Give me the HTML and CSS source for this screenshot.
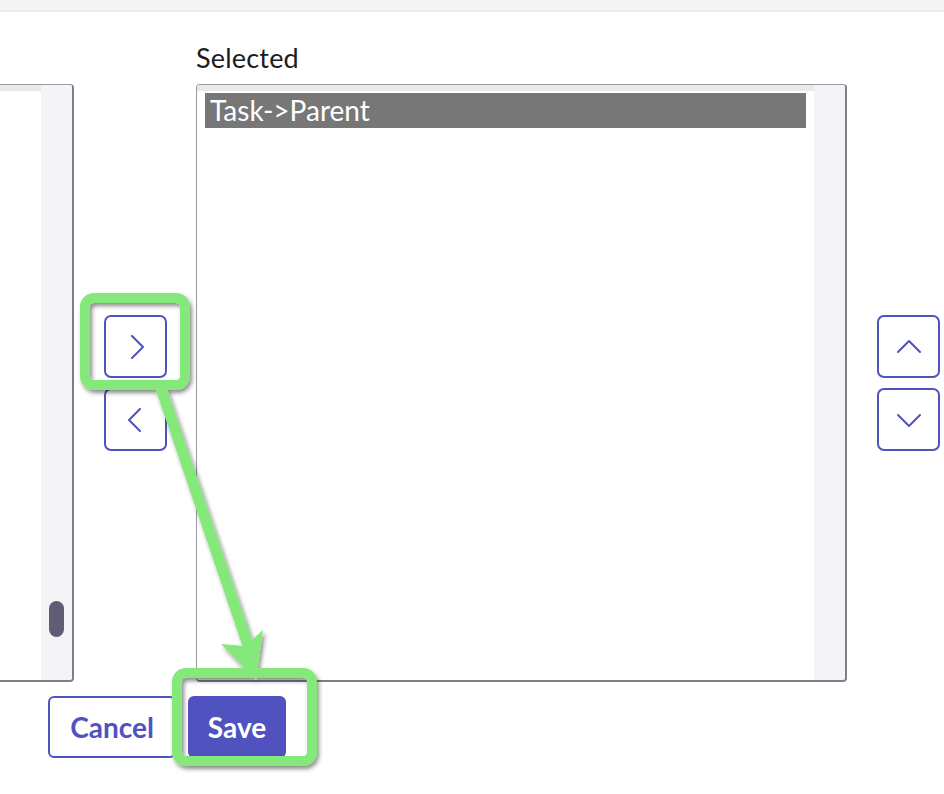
FILE: index.html
```html
<!DOCTYPE html>
<html lang="en">
<head>
<meta charset="utf-8">
<title>Columns</title>
<link rel="stylesheet" href="styles.css">
</head>
<body>
<div class="topbar"></div>
<div class="page">
  <div class="picker">
    <div class="label label-hidden">Available</div>
    <div class="label-gap"></div>
    <div class="label">Selected</div>
    <div class="label-gap"></div>

    <div class="listbox listbox-left">
      <div class="list-content">
        <div class="list-shade"></div>
      </div>
      <div class="track"><div class="thumb"></div></div>
    </div>

    <div class="move-buttons">
      <button class="icon-btn" aria-label="Add">
        <svg width="24" height="24" viewBox="0 0 24 24"><path d="M8 1 L19 12 L8 23" /></svg>
      </button>
      <button class="icon-btn" aria-label="Remove">
        <svg width="24" height="24" viewBox="0 0 24 24"><path d="M16 1 L5 12 L16 23" /></svg>
      </button>
    </div>

    <div class="listbox listbox-selected">
      <div class="list-content">
        <div class="list-shade"></div>
        <div class="option option-selected">Task-&gt;Parent</div>
      </div>
      <div class="track"></div>
    </div>

    <div class="move-buttons">
      <button class="icon-btn" aria-label="Move up">
        <svg width="24" height="24" viewBox="0 0 24 24"><path d="M1 17 L12 6 L23 17" /></svg>
      </button>
      <button class="icon-btn" aria-label="Move down">
        <svg width="24" height="24" viewBox="0 0 24 24"><path d="M1 7 L12 18 L23 7" /></svg>
      </button>
    </div>
  </div>

  <div class="actions">
    <button class="btn btn-outline">Cancel</button>
    <button class="btn btn-primary">Save</button>
  </div>
</div>

<svg class="annotations" width="944" height="794" viewBox="0 0 944 794">
  <defs>
    <filter id="shadow" x="-20%" y="-20%" width="140%" height="140%">
      <feDropShadow dx="2" dy="3" stdDeviation="2" flood-color="#000" flood-opacity="0.45"/>
    </filter>
  </defs>
  <g filter="url(#shadow)" fill="none" stroke="#84e97a" stroke-width="10" stroke-linejoin="round" stroke-linecap="round">
    <rect x="85" y="298" width="100" height="87" rx="9"/>
    <rect x="177" y="673" width="135" height="88" rx="9"/>
    <line x1="160" y1="385" x2="248" y2="645" stroke-width="11" stroke-linecap="butt"/>
    <polygon points="256,680 263,630 245,646 221,644" fill="#84e97a" stroke="none"/>
  </g>
</svg>
</body>
</html>
```

FILE: styles.css
```css
* {
  box-sizing: border-box;
}

body {
  margin: 0;
  background: #ffffff;
  font-family: Lato, "Open Sans", sans-serif;
  color: #1c1c1e;
  width: 944px;
  height: 794px;
  overflow: hidden;
  position: relative;
}

.topbar {
  height: 12px;
  background: #f4f4f4;
  border-bottom: 2px solid #ebebeb;
}

.page {
  padding-top: 31px;
}

.picker {
  display: grid;
  grid-template-columns: 74px 62px 651px 64px;
  grid-template-rows: auto 598px;
  column-gap: 30px;
}

.label {
  font-size: 27px;
  line-height: 30px;
  margin-bottom: 11px;
  letter-spacing: 0.2px;
}

.label-hidden {
  visibility: hidden;
}

.listbox {
  display: flex;
  background: #ffffff;
  border: 1px solid #979ba3;
  border-right: 2px solid #7a7f89;
  border-bottom: 2px solid #7a7f89;
  border-radius: 4px;
  overflow: hidden;
}

.listbox-left {
  border-left: 0;
  border-top-left-radius: 0;
  border-bottom-left-radius: 0;
}

.list-content {
  flex: 1;
  display: flex;
  flex-direction: column;
}

.list-shade {
  height: 6px;
  background: #e8e9e9;
  margin-bottom: 2px;
}

.option {
  height: 35px;
  line-height: 35px;
  font-size: 28px;
  padding-left: 5px;
  margin: 0 8px;
  white-space: nowrap;
}

.option-selected {
  background: #777777;
  color: #ffffff;
}

.track {
  width: 31px;
  background: #f4f4f6;
  display: flex;
  flex-direction: column;
  justify-content: flex-end;
  align-items: center;
  padding-bottom: 43px;
}

.thumb {
  width: 15px;
  height: 36px;
  border-radius: 8px;
  background: #5e5d74;
}

.move-buttons {
  display: flex;
  flex-direction: column;
  justify-content: center;
  gap: 10px;
}

.icon-btn {
  width: 63px;
  height: 63px;
  padding: 0;
  margin: 0;
  background: #ffffff;
  border: 2px solid #5053bf;
  border-radius: 7px;
  display: flex;
  align-items: center;
  justify-content: center;
}

.icon-btn svg path {
  fill: none;
  stroke: #5053bf;
  stroke-width: 2;
  stroke-linecap: round;
  stroke-linejoin: round;
}

.actions {
  display: flex;
  gap: 12px;
  padding-left: 48px;
  margin-top: 14px;
}

.btn {
  height: 62px;
  font-family: Lato, "Open Sans", sans-serif;
  font-size: 28px;
  font-weight: 700;
  border-radius: 6px;
  padding: 0;
  margin: 0;
}

.btn-outline {
  width: 128px;
  background: #ffffff;
  color: #5053bf;
  border: 2px solid #5053bf;
}

.btn-primary {
  width: 98px;
  background: #5053bf;
  color: #ffffff;
  border: 0;
}

.annotations {
  position: absolute;
  left: 0;
  top: 0;
  pointer-events: none;
}
```
